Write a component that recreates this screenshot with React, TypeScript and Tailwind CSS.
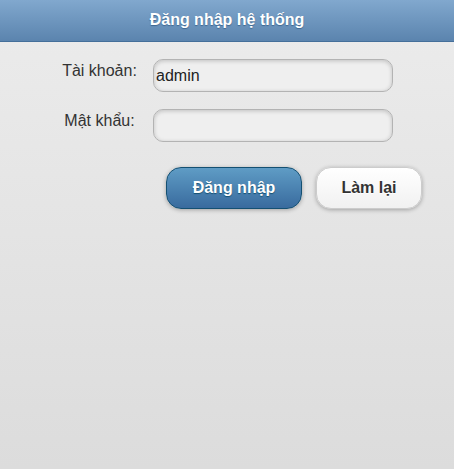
import { useState } from "react";

export default function App() {
  const [user, setUser] = useState("admin");
  const [pass, setPass] = useState("");

  return (
    <div className="min-h-[469px] w-full bg-gradient-to-b from-[#ececec] to-[#dcdcdc] font-['Liberation_Sans',Arial,sans-serif] text-[#333]">
      <header className="h-[42px] flex items-center justify-center border-b border-[#456f9a] bg-gradient-to-b from-[#81a8ce] to-[#5b84ae]">
        <h1 className="text-[16px] leading-[18px] font-bold text-white [text-shadow:0_1px_1px_#3e6790] pb-[2px]">
          Đăng nhập hệ thống
        </h1>
      </header>

      <form className="pt-[17px]" onSubmit={(e) => e.preventDefault()}>
        <div className="flex items-start">
          <label className="w-[153px] pl-[48px] pr-[2px] mt-[3px] text-center text-[16px] leading-[18px] text-[#333]">
            Tài khoản:
          </label>
          <input
            value={user}
            onChange={(e) => setUser(e.target.value)}
            className="w-[240px] h-[33px] px-[2px] rounded-[10px] border border-[#b3b3b3] bg-[#efefef] shadow-[inset_0_1px_4px_rgba(0,0,0,0.2)] text-[16px] leading-[18px] text-[#222] outline-none"
          />
        </div>
        <div className="flex items-start mt-[17px]">
          <label className="w-[153px] pl-[48px] pr-[2px] mt-[3px] text-center text-[16px] leading-[18px] text-[#333]">
            Mật khẩu:
          </label>
          <input
            type="password"
            value={pass}
            onChange={(e) => setPass(e.target.value)}
            className="w-[240px] h-[33px] px-[2px] rounded-[10px] border border-[#b3b3b3] bg-[#efefef] shadow-[inset_0_1px_4px_rgba(0,0,0,0.2)] text-[16px] leading-[18px] text-[#222] outline-none"
          />
        </div>

        <div className="flex mt-[25px] pl-[166px] gap-[14px]">
          <button
            type="submit"
            className="w-[136px] h-[42px] rounded-[15px] border border-[#145072] bg-gradient-to-b from-[#5f9cc5] to-[#396b9e] shadow-[0_1px_4px_rgba(0,0,0,0.3)] text-white text-[16px] font-bold [text-shadow:0_1px_1px_#145072]"
          >
            Đăng nhập
          </button>
          <button
            type="reset"
            onClick={() => {
              setUser("");
              setPass("");
            }}
            className="w-[106px] h-[42px] rounded-[15px] border border-[#cccccc] bg-gradient-to-b from-[#ffffff] to-[#f1f1f1] shadow-[0_1px_4px_rgba(0,0,0,0.3)] text-[#333] text-[16px] font-bold [text-shadow:0_1px_0_#fff]"
          >
            Làm lại
          </button>
        </div>
      </form>
    </div>
  );
}
